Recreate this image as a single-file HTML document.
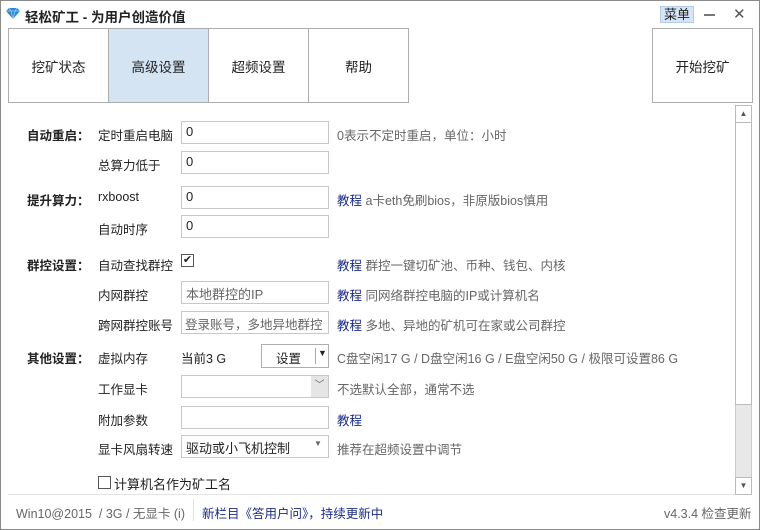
<!DOCTYPE html><html><head><meta charset="utf-8"><style>
*{box-sizing:border-box;margin:0;padding:0}
body{width:760px;height:530px;overflow:hidden;background:#fff;font-family:"Liberation Sans","Noto Sans CJK SC",sans-serif;font-size:12.5px;color:#222;position:relative}
.win{position:absolute;left:0;top:0;width:760px;height:530px;border:1px solid #8a8a8a}
.a{position:absolute;white-space:nowrap}
.nav{position:absolute;top:28px;height:75px;width:101px;border:1px solid #adadad;background:#fff;display:flex;align-items:center;justify-content:center;font-size:13.5px}
.lab{font-weight:bold}
.in{position:absolute;left:181px;width:148px;height:23px;border:1px solid #c8c8c8;padding:2px 4px;font-size:13px;white-space:nowrap;overflow:hidden}
.g{color:#666}
.l{color:#1a2a8a}
</style></head><body><div class="win"></div>
<svg class="a" style="left:5px;top:7px" width="16" height="13" viewBox="0 0 16 13"><path d="M1 4 L4 1 H12 L15 4 L8 12 Z" fill="#2a86d8"/><path d="M1 4 H15 M4 1 L6 4 L8 12 M12 1 L10 4 L8 12" stroke="#9fd0f5" stroke-width="0.8" fill="none"/></svg>
<div class="a" style="left:25px;top:6px;font-weight:bold;font-size:13.5px">轻松矿工 - 为用户创造价值</div>
<div class="a" style="left:660px;top:6px;width:34px;height:17px;background:#d5e5f6;border:1px solid #b4cde6;text-align:center;font-size:13px;line-height:15px">菜单</div>
<div class="a" style="left:704px;top:14px;width:11px;height:2px;background:#777"></div>
<div class="a" style="left:733px;top:5px;font-size:15px;color:#555">✕</div>
<div class="nav" style="left:8px">挖矿状态</div>
<div class="nav" style="left:108px;background:#d5e4f3">高级设置</div>
<div class="nav" style="left:208px">超频设置</div>
<div class="nav" style="left:308px">帮助</div>
<div class="nav" style="left:652px">开始挖矿</div>
<div class="a" style="left:735px;top:105px;width:17px;height:390px;background:#e8e8e8;border:1px solid #ccc"></div>
<div class="a" style="left:735px;top:105px;width:17px;height:18px;background:#fff;border:1px solid #bbb;font-size:8px;text-align:center;color:#555;line-height:16px">▲</div>
<div class="a" style="left:735px;top:122px;width:17px;height:283px;background:#fff;border:1px solid #bbb"></div>
<div class="a" style="left:735px;top:477px;width:17px;height:18px;background:#fff;border:1px solid #bbb;font-size:8px;text-align:center;color:#555;line-height:16px">▼</div>

<div class="a lab" style="left:27px;top:125px">自动重启：</div>
<div class="a" style="left:98px;top:125px">定时重启电脑</div><div class="in" style="top:121px">0</div>
<div class="a g" style="left:337px;top:125px">0表示不定时重启，单位：小时</div>
<div class="a" style="left:98px;top:155px">总算力低于</div><div class="in" style="top:151px">0</div>
<div class="a lab" style="left:27px;top:190px">提升算力：</div>
<div class="a" style="left:98px;top:190px">rxboost</div><div class="in" style="top:186px">0</div>
<div class="a" style="left:337px;top:190px"><span class="l">教程</span> <span class="g">a卡eth免刷bios，非原版bios慎用</span></div>
<div class="a" style="left:98px;top:219px">自动时序</div><div class="in" style="top:215px">0</div>
<div class="a lab" style="left:27px;top:255px">群控设置：</div>
<div class="a" style="left:98px;top:255px">自动查找群控</div>
<div class="a" style="left:181px;top:254px;width:13px;height:13px;border:1px solid #555;font-size:11px;line-height:11px;text-align:center">✔</div>
<div class="a" style="left:337px;top:255px"><span class="l">教程</span> <span class="g">群控一键切矿池、币种、钱包、内核</span></div>
<div class="a" style="left:98px;top:285px">内网群控</div><div class="in g" style="top:281px">本地群控的IP</div>
<div class="a" style="left:337px;top:285px"><span class="l">教程</span> <span class="g">同网络群控电脑的IP或计算机名</span></div>
<div class="a" style="left:98px;top:315px">跨网群控账号</div><div class="in g" style="top:311px;font-size:12.5px;padding-left:3px">登录账号，多地异地群控</div>
<div class="a" style="left:337px;top:315px"><span class="l">教程</span> <span class="g">多地、异地的矿机可在家或公司群控</span></div>
<div class="a lab" style="left:27px;top:348px">其他设置：</div>
<div class="a" style="left:98px;top:348px">虚拟内存</div>
<div class="a" style="left:181px;top:348px">当前3 G</div>
<div class="a" style="left:261px;top:344px;width:68px;height:24px;border:1px solid #adadad;background:#fff"><span class="a" style="left:14px;top:3px">设置</span><span class="a" style="left:53px;top:3px;width:1px;height:16px;background:#aaa"></span><span class="a" style="left:56px;top:3px;font-size:9px">▼</span></div>
<div class="a g" style="left:337px;top:348px">C盘空闲17 G / D盘空闲16 G / E盘空闲50 G / 极限可设置86 G</div>
<div class="a" style="left:98px;top:379px">工作显卡</div>
<div class="in" style="top:375px"></div><div class="a" style="left:311px;top:376px;width:17px;height:21px;background:#e5e5e5;color:#666;font-size:10px;text-align:center;line-height:20px">﹀</div>
<div class="a g" style="left:337px;top:379px">不选默认全部，通常不选</div>
<div class="a" style="left:98px;top:410px">附加参数</div><div class="in" style="top:406px"></div>
<div class="a l" style="left:337px;top:410px">教程</div>
<div class="a" style="left:98px;top:439px">显卡风扇转速</div><div class="in" style="top:435px">驱动或小飞机控制<span class="a g" style="left:132px;top:3px;font-size:8px">▼</span></div>
<div class="a g" style="left:337px;top:439px">推荐在超频设置中调节</div>
<div class="a" style="left:98px;top:476px;width:13px;height:13px;border:1px solid #555"></div>
<div class="a" style="left:114px;top:474px;font-size:13px">计算机名作为矿工名</div>
<div class="a" style="left:8px;top:494px;width:727px;height:1px;background:#e4e4e4"></div>
<div class="a g" style="left:16px;top:503px">Win10@2015 &nbsp;/ 3G / 无显卡 (i)</div>
<div class="a" style="left:193px;top:499px;width:1px;height:22px;background:#e4e4e4"></div>
<div class="a l" style="left:202px;top:503px">新栏目《答用户问》，持续更新中</div>
<div class="a g" style="left:664px;top:503px">v4.3.4 检查更新</div>
</body></html>
